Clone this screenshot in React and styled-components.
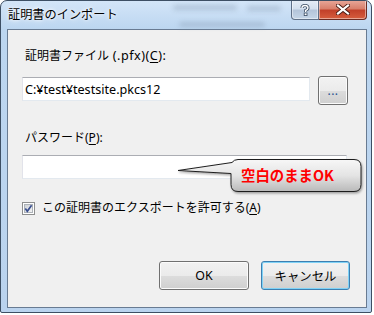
import React from "react";
import styled, { createGlobalStyle } from "styled-components";

const GlobalStyle = createGlobalStyle`
  html, body {
    margin: 0;
    padding: 0;
    background: #ffffff;
  }
  * {
    box-sizing: border-box;
  }
`;

const jp = `"Noto Sans", "Noto Sans CJK JP", sans-serif`;

const Window = styled.div`
  position: relative;
  width: 372px;
  height: 313px;
  display: flex;
  flex-direction: column;
  padding: 0 4px 4px 6px;
  border: 1px solid #3d4f64;
  border-radius: 7px 7px 2px 2px;
  background: linear-gradient(180deg, #d3e5f8 0px, #bcd6f0 28px, #bad3ee 100%);
  overflow: hidden;
`;

const TitleBar = styled.div`
  position: relative;
  height: 28px;
  display: flex;
  align-items: flex-start;
`;

const Blur = styled.span`
  position: absolute;
  height: 5px;
  border-radius: 3px;
  background: #7b8ea6;
  filter: blur(2.5px);
  opacity: 0.35;
`;

const Title = styled.div`
  margin: 6px 0 0 1px;
  font-family: ${jp};
  font-size: 12.2px;
  line-height: 16px;
  color: #000;
  text-shadow: 0 0 6px #ffffff, 0 0 3px #ffffff;
`;

const Caption = styled.div`
  margin-left: auto;
  margin-top: -1px;
  display: flex;
  position: relative;
  z-index: 1;
`;

const CapButton = styled.div`
  height: 20px;
  width: ${(p) => p.$w}px;
  display: flex;
  align-items: center;
  justify-content: center;
  border: 1px solid ${(p) => (p.$close ? "#6b2b22" : "#5f7087")};
  border-top: none;
  border-radius: ${(p) => (p.$close ? "0 0 4px 0" : "0 0 0 4px")};
  background: ${(p) =>
    p.$close
      ? "linear-gradient(180deg, #e9a99b 0%, #d9806c 45%, #c2412a 55%, #d65e3e 100%)"
      : "linear-gradient(180deg, #e6eef7 0%, #d4e0ee 45%, #b4c5da 55%, #c5d6e8 100%)"};
  box-shadow: inset 0 0 0 1px rgba(255, 255, 255, 0.45);
  & + & {
    border-left: none;
  }
`;

const Client = styled.div`
  flex: 1;
  display: flex;
  flex-direction: column;
  padding: 18px 18px 17px 14px;
  background: #f0f0f0;
  border: 1px solid #687b92;
  font-family: ${jp};
  font-size: 12px;
  color: #000;
`;

const Label = styled.div`
  line-height: 16px;
  padding-left: 3px;
  margin-top: ${(p) => p.$mt || 0}px;
  u {
    text-decoration: underline;
    text-underline-offset: 2px;
  }
`;

const Latin = styled.span`
  font-size: 12.6px;
  letter-spacing: 0.5px;
`;

const Row = styled.div`
  display: flex;
  align-items: flex-start;
  gap: 8px;
  margin-top: 12px;
`;

const Input = styled.div`
  position: relative;
  height: 24px;
  flex: ${(p) => (p.$grow ? 1 : "none")};
  margin-top: ${(p) => p.$mt || 0}px;
  margin-right: ${(p) => p.$mr || 0}px;
  padding-left: 2px;
  display: flex;
  align-items: center;
  background: #ffffff;
  border: 1px solid #e3e9ef;
  border-top-color: #abadb3;
  border-left-color: #e2e3ea;
  font-size: 12.6px;
`;

const Button = styled.div`
  width: ${(p) => p.$w}px;
  height: 29px;
  display: flex;
  align-items: center;
  justify-content: center;
  border: 1px solid ${(p) => (p.$focus ? "#3c7fb1" : "#707070")};
  border-radius: 3px;
  background: linear-gradient(180deg, #f2f2f2 0%, #ebebeb 50%, #dddddd 50%, #cfcfcf 100%);
  box-shadow: inset 0 0 0 1px ${(p) => (p.$focus ? "#7fd2f6" : "#fbfbfb")};
  font-family: ${jp};
  font-size: ${(p) => p.$fs || 12.4}px;
  color: ${(p) => p.$color || "#000"};
  letter-spacing: ${(p) => p.$ls || 0}px;
`;

const CheckRow = styled.div`
  display: flex;
  align-items: center;
  gap: 7px;
  margin-top: 21px;
  line-height: 16px;
  u {
    text-decoration: underline;
    text-underline-offset: 2px;
  }
`;

const Footer = styled.div`
  margin-top: auto;
  margin-right: -2px;
  display: flex;
  justify-content: flex-end;
  gap: 12px;
`;

const Callout = styled.div`
  position: absolute;
  left: 154px;
  top: 2px;
  width: 188px;
  height: 38px;
  z-index: 2;
`;

const CalloutText = styled.div`
  position: absolute;
  left: 64px;
  top: 8px;
  font-family: "Noto Sans CJK JP", sans-serif;
  font-weight: 700;
  font-size: 14.4px;
  line-height: 18px;
  color: #ff0000;
  white-space: nowrap;
`;

const CheckBox = () => (
  <svg width="13" height="13" viewBox="0 0 13 13">
    <defs>
      <linearGradient id="cbg" x1="0" y1="0" x2="1" y2="1">
        <stop offset="0" stopColor="#cbcfd5" />
        <stop offset="1" stopColor="#f6f6f6" />
      </linearGradient>
    </defs>
    <rect x="0.5" y="0.5" width="12" height="12" fill="#fff" stroke="#8e8f8f" />
    <rect x="2.5" y="2.5" width="8" height="8" fill="url(#cbg)" stroke="#aeb3b9" />
    <path d="M3.3 6.6 L5.3 9.2 L9.6 3.2" fill="none" stroke="#3a4f8f" strokeWidth="1.7" />
  </svg>
);

const HelpGlyph = () => (
  <svg width="10" height="12" viewBox="0 0 10 12">
    <path
      d="M2 4 Q2 1.5 5 1.5 Q8 1.5 8 4 Q8 5.5 5.6 6.5 L5.6 8"
      fill="none"
      stroke="#3b4d63"
      strokeWidth="3"
    />
    <path
      d="M2 4 Q2 1.5 5 1.5 Q8 1.5 8 4 Q8 5.5 5.6 6.5 L5.6 8"
      fill="none"
      stroke="#ffffff"
      strokeWidth="1.4"
    />
    <rect x="4.2" y="9" width="2.8" height="2.6" fill="#ffffff" stroke="#3b4d63" strokeWidth="0.8" />
  </svg>
);

const CloseGlyph = () => (
  <svg width="14" height="11" viewBox="0 0 14 11">
    <path d="M2 1.5 L12 9.5 M12 1.5 L2 9.5" stroke="#4a1c14" strokeWidth="4" strokeLinecap="square" />
    <path d="M2 1.5 L12 9.5 M12 1.5 L2 9.5" stroke="#ffffff" strokeWidth="2.2" strokeLinecap="square" />
  </svg>
);

const CalloutShape = () => (
  <svg width="188" height="38" viewBox="0 0 188 38">
    <defs>
      <linearGradient id="cog" x1="0" y1="0" x2="0" y2="1">
        <stop offset="0" stopColor="#f7f7f7" />
        <stop offset="0.5" stopColor="#e4e4e4" />
        <stop offset="1" stopColor="#b9b9b9" />
      </linearGradient>
      <filter id="cosh" x="-10%" y="-20%" width="130%" height="160%">
        <feDropShadow dx="1" dy="1.5" stdDeviation="1" floodColor="#000" floodOpacity="0.35" />
      </filter>
    </defs>
    <path
      d="M1 12.5 L55 4.5 Q57 1.5 61 1.5 L177 1.5 Q184 1.5 184 8.5 L184 26.5 Q184 33.5 177 33.5 L61 33.5 Q54 33.5 54 26.5 L54 15.5 Z"
      fill="url(#cog)"
      stroke="#1e1e1e"
      strokeWidth="1"
      filter="url(#cosh)"
    />
  </svg>
);

const App = () => {
  return (
    <>
      <GlobalStyle />
      <Window>
        <TitleBar>
          <Blur style={{ left: 166, top: 4, width: 64 }} />
          <Blur style={{ left: 240, top: 5, width: 34 }} />
          <Blur style={{ left: 172, top: 21, width: 86 }} />
          <Title>証明書のインポート</Title>
          <Caption>
            <CapButton $w={28}>
              <HelpGlyph />
            </CapButton>
            <CapButton $w={48} $close>
              <CloseGlyph />
            </CapButton>
          </Caption>
        </TitleBar>
        <Client>
          <Label>
            証明書ファイル<Latin> (.pfx)(<u>C</u>):</Latin>
          </Label>
          <Row>
            <Input $grow $mt={1}>C:¥test¥testsite.pkcs12</Input>
            <Button $w={30} $color="#1f4f8f" $fs={12} $ls={0.5}>
              ...
            </Button>
          </Row>
          <Label $mt={25}>
            パスワード(<u>P</u>):
          </Label>
          <Input $mt={9} $mr={1}>
            <Callout>
              <CalloutShape />
              <CalloutText>空白のままOK</CalloutText>
            </Callout>
          </Input>
          <CheckRow>
            <CheckBox />
            <span>
              この証明書のエクスポートを許可する(<u>A</u>)
            </span>
          </CheckRow>
          <Footer>
            <Button $w={90}>OK</Button>
            <Button $w={89} $focus>
              キャンセル
            </Button>
          </Footer>
        </Client>
      </Window>
    </>
  );
};

export default App;
